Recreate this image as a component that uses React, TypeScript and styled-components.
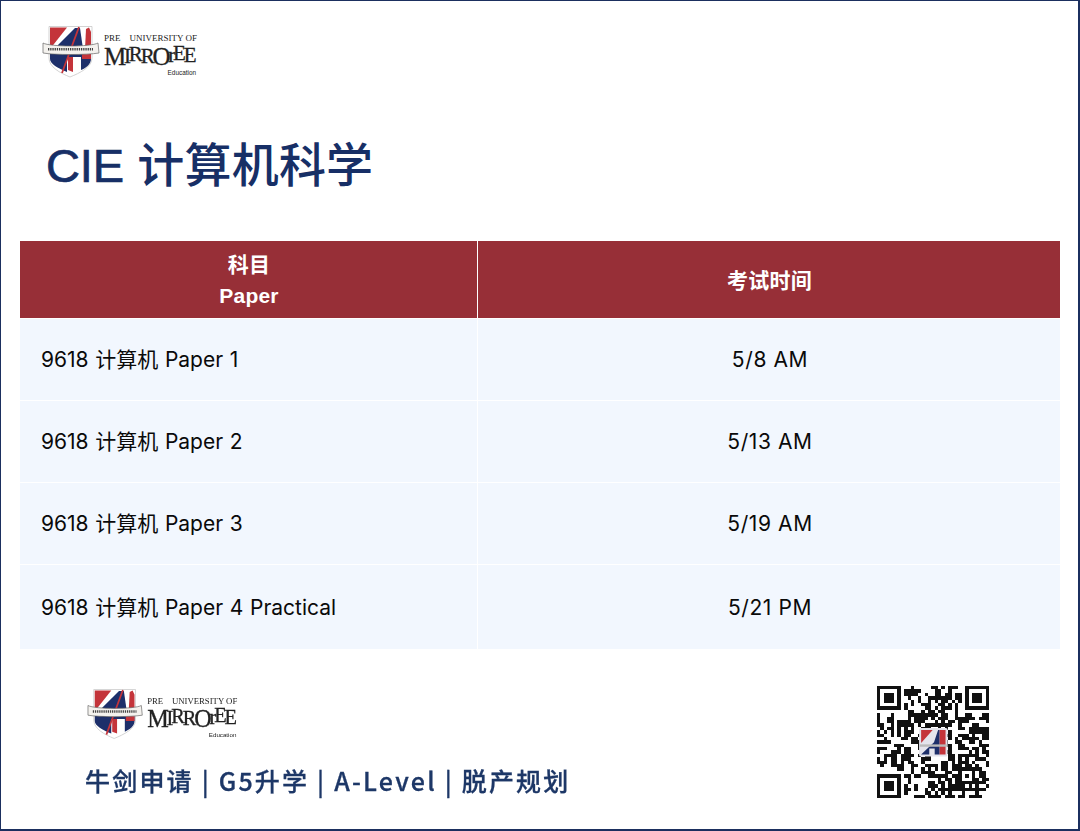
import React from "react";
import styled, { createGlobalStyle } from "styled-components";

const Global = createGlobalStyle`
  html, body { margin: 0; padding: 0; background: #fff; }
  #root { width: 1080px; height: 831px; }
`;

const CJK = `"Liberation Sans", "Noto Sans CJK SC", sans-serif`;
const BODY = `Inter, "Noto Sans CJK SC", sans-serif`;

const Page = styled.div`
  box-sizing: border-box;
  width: 1080px;
  height: 831px;
  border: 2px solid #1b2f5f;
  border-top-width: 1px;
  border-left-width: 1px;
  padding: 25px 18px 0 19px;
  background: #fff;
  display: flex;
  flex-direction: column;
  font-family: ${CJK};
  overflow: hidden;
`;

const TopBrand = styled.div`
  margin-left: 22px;
  height: 56px;
`;

const Title = styled.h1`
  margin: 49px 0 0 26px;
  height: 70px;
  line-height: 70px;
  font-size: 47px;
  font-weight: 500;
  color: #172f66;
  letter-spacing: 0.2px;
`;

const TitleLatin = styled.span`
  letter-spacing: -0.1px;
  -webkit-text-stroke: 0.7px #172f66;
`;

const Table = styled.div`
  margin-top: 40px;
  width: 1040px;
  display: grid;
  grid-template-columns: 457px 1fr;
  grid-template-rows: 77px 82px 82px 82px 85px;
  column-gap: 1px;
`;

const HeadCell = styled.div`
  background: #972f37;
  color: #fff;
  display: flex;
  align-items: center;
  justify-content: center;
  text-align: center;
  padding: 1px 0 0 1px;
  font-size: 21px;
  line-height: 31px;
  font-weight: 700;
  letter-spacing: 0.2px;
  white-space: pre-line;
`;

const BodyCell = styled.div<{ $center?: boolean }>`
  background: #f2f7fe;
  border-top: 1px solid #fff;
  color: #0a0a0a;
  display: flex;
  align-items: center;
  justify-content: ${(p) => (p.$center ? "center" : "flex-start")};
  padding: 1px 0 0 ${(p) => (p.$center ? 2 : 21)}px;
  font-family: ${BODY};
  font-size: 21px;
  line-height: 26px;
  letter-spacing: ${(p) => (p.$center ? 0.6 : 0)}px;
  word-spacing: ${(p) => (p.$center ? 0 : 0.75)}px;
  box-sizing: border-box;
`;

const Footer = styled.div`
  flex: 1;
  display: flex;
  justify-content: space-between;
  padding: 37px 71px 0 65px;
`;

const FooterLeft = styled.div`
  display: flex;
  flex-direction: column;
`;

const FooterBrand = styled.div`
  margin: 3px 0 0 2px;
  height: 53px;
  transform: scale(0.97);
  transform-origin: left top;
  filter: blur(0.6px);
`;

const Slogan = styled.div`
  margin-top: 21px;
  font-family: "Noto Sans CJK SC", sans-serif;
  font-size: 25px;
  line-height: 34px;
  font-weight: 500;
  letter-spacing: 2.2px;
  color: #1d3767;
  -webkit-text-stroke: 0.3px #1d3767;
  white-space: nowrap;
  filter: blur(0.3px);
`;

const QrWrap = styled.div`
  width: 112px;
  height: 112px;
  filter: blur(0.6px);
`;

const BrandRow = styled.div`
  display: flex;
  align-items: flex-start;
  gap: 4px;
`;

const BrandText = styled.div`
  display: flex;
  flex-direction: column;
  padding-top: 7px;
  width: 92px;
  color: #222;
`;

const BrandTop = styled.div`
  font-family: "Liberation Serif", serif;
  font-size: 9px;
  line-height: 10px;
  white-space: pre;
`;

const BrandName = styled.div`
  display: flex;
  align-items: center;
  height: 26px;
  padding-top: 1px;
  box-sizing: border-box;
  font-family: "Liberation Serif", serif;
  line-height: 25px;
  letter-spacing: -2.2px;
  -webkit-text-stroke: 0.3px #222;
  white-space: nowrap;
`;

const Letter = styled.span<{ $raise?: number; $large?: boolean }>`
  position: relative;
  top: ${(p) => -(p.$raise ?? 0)}px;
  font-size: ${(p) => (p.$large ? 25 : 21)}px;
`;

const BrandSub = styled.div`
  font-family: "Liberation Sans", sans-serif;
  font-size: 6.4px;
  line-height: 7px;
  text-align: right;
`;

const Crest = () => (
  <svg width="58" height="52" viewBox="0 0 58 52">
    <path d="M7 0.5H50V32C50 41 38 47 28 51C18 47 7 41 7 32Z" fill="#fff" stroke="#c8c8c8" strokeWidth="0.8" />
    <path d="M8 1.5H25L8 23Z" fill="#c4343a" />
    <path d="M12 23L33 2H38L41 23Z" fill="#1d2f6a" />
    <path d="M44 3L47 1.5L49 6V23H43Z" fill="#c4343a" />
    <path d="M8 27H49V33C49 38 44 42 39 44V31H25V46C16 42 8 38 8 33Z" fill="#1d2f6a" />
    <path d="M26 31H31V46L26 44Z" fill="#c4343a" />
    <path d="M40 27H49V33H40Z" fill="#c4343a" />
    <path d="M20 47L37 1" stroke="#c4343a" strokeWidth="1.8" />
    <path d="M1 17C8 21 49 21 56 17L57 27C45 29 12 29 1 27Z" fill="#f4f2ee" stroke="#666" strokeWidth="0.7" />
    <path d="M6 23.2H51" stroke="#444" strokeWidth="2.6" strokeDasharray="1.3 0.9" />
  </svg>
);

const Brand = () => (
  <BrandRow>
    <Crest />
    <BrandText>
      <BrandTop>{"PRE    UNIVERSITY OF"}</BrandTop>
      <BrandName>
        <Letter $large>M</Letter>
        <Letter>I</Letter>
        <Letter $raise={2}>R</Letter>
        <Letter>R</Letter>
        <Letter $large>O</Letter>
        <Letter $raise={1}>r</Letter>
        <Letter $raise={3}>E</Letter>
        <Letter $raise={1}>E</Letter>
      </BrandName>
      <BrandSub>Education</BrandSub>
    </BrandText>
  </BrandRow>
);

function qrModules(): boolean[][] {
  const n = 33;
  let s = 9618;
  const rnd = () => {
    s = (s * 1664525 + 1013904223) >>> 0;
    return (s >>> 16) / 65536;
  };
  const g: boolean[][] = [];
  for (let y = 0; y < n; y++) {
    const r: boolean[] = [];
    for (let x = 0; x < n; x++) r.push(rnd() > 0.48);
    g.push(r);
  }
  const finder = (ox: number, oy: number) => {
    for (let y = -1; y < 8; y++)
      for (let x = -1; x < 8; x++) {
        const X = ox + x;
        const Y = oy + y;
        if (X < 0 || Y < 0 || X >= n || Y >= n) continue;
        const inB = x >= 0 && x < 7 && y >= 0 && y < 7;
        const ring = x === 0 || x === 6 || y === 0 || y === 6;
        const core = x >= 2 && x <= 4 && y >= 2 && y <= 4;
        g[Y][X] = inB && (ring || core);
      }
  };
  finder(0, 0);
  finder(26, 0);
  finder(0, 26);
  for (let y = 24; y < 29; y++)
    for (let x = 24; x < 29; x++)
      g[y][x] = x === 24 || x === 28 || y === 24 || y === 28 || (x === 26 && y === 26);
  return g;
}

const Qr = () => {
  const g = qrModules();
  return (
    <svg width="112" height="112" viewBox="0 0 33 33" shapeRendering="crispEdges">
      {g.map((r, y) => r.map((on, x) => (on ? <rect key={`${x}-${y}`} x={x} y={y} width="1" height="1" fill="#111" /> : null)))}
      <g shapeRendering="geometricPrecision">
        <rect x="12.4" y="12.4" width="8.4" height="8.4" rx="0.5" fill="#e4e4ec" />
        <path d="M13 13H16.4L13 16.8Z M18.4 13H20.2V20.2H18.4Z" fill="#c4343a" />
        <path d="M13 20.2L16.8 16.6L18 13H18.4V20.2H17V18.4H15.4V20.2Z" fill="#1d2f6a" />
        <path d="M12.6 17.2H20.6V17.9H12.6Z" fill="#bbb" />
      </g>
    </svg>
  );
};

const rows = [
  ["9618 计算机 Paper 1", "5/8 AM"],
  ["9618 计算机 Paper 2", "5/13 AM"],
  ["9618 计算机 Paper 3", "5/19 AM"],
  ["9618 计算机 Paper 4 Practical", "5/21 PM"],
];

export default function App() {
  return (
    <Page>
      <Global />
      <TopBrand>
        <Brand />
      </TopBrand>
      <Title>
        <TitleLatin>CIE</TitleLatin> 计算机科学
      </Title>
      <Table>
        <HeadCell>{"科目\nPaper"}</HeadCell>
        <HeadCell>考试时间</HeadCell>
        {rows.map(([a, b]) => (
          <React.Fragment key={a}>
            <BodyCell>{a}</BodyCell>
            <BodyCell $center>{b}</BodyCell>
          </React.Fragment>
        ))}
      </Table>
      <Footer>
        <FooterLeft>
          <FooterBrand>
            <Brand />
          </FooterBrand>
          <Slogan>牛剑申请 | G5升学 | A-Level | 脱产规划</Slogan>
        </FooterLeft>
        <QrWrap>
          <Qr />
        </QrWrap>
      </Footer>
    </Page>
  );
}
